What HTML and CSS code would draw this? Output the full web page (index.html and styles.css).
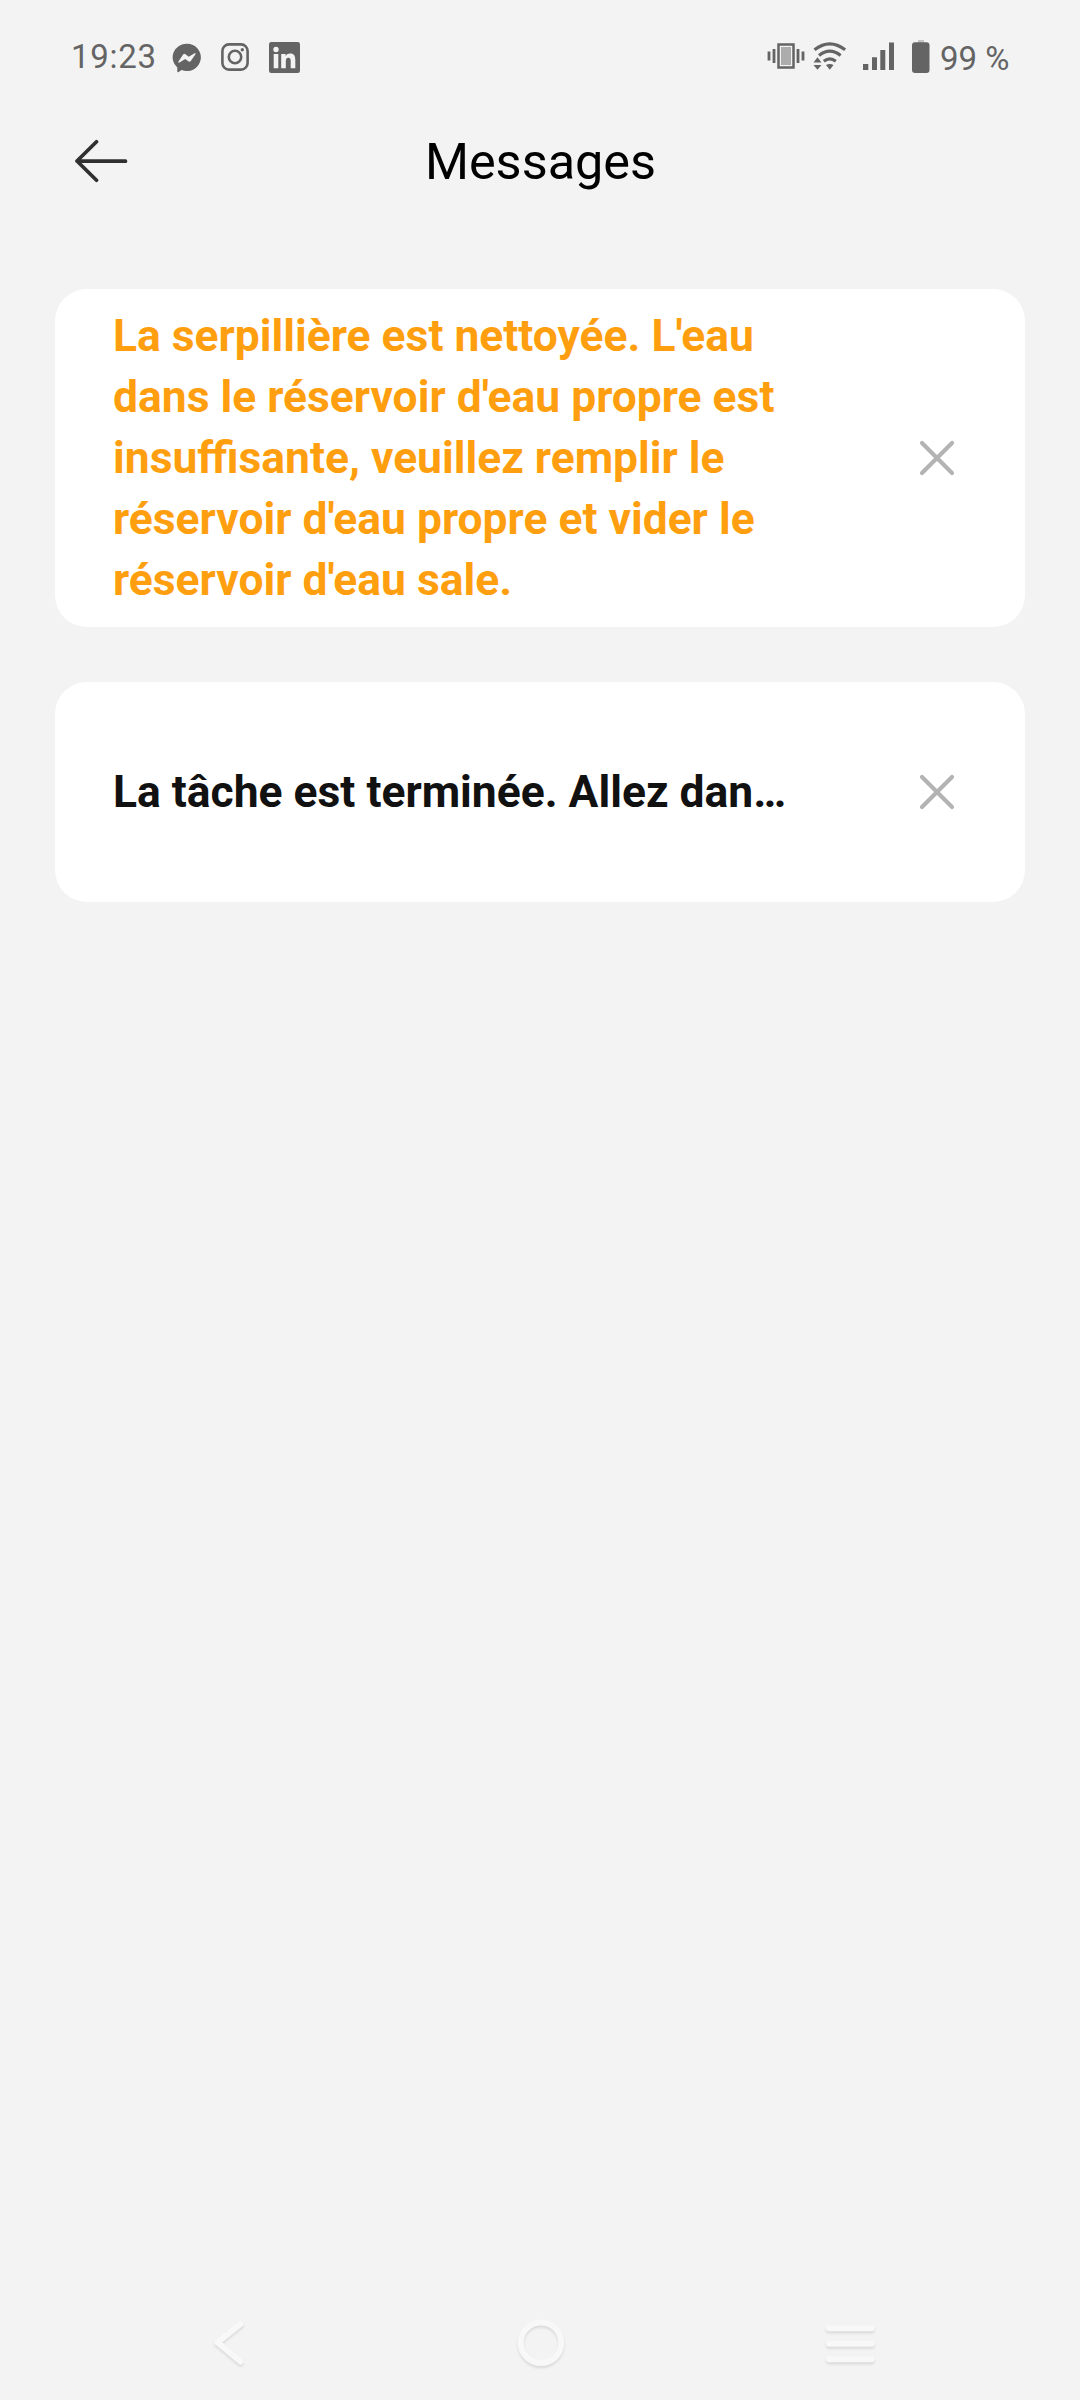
FILE: index.html
```html
<!DOCTYPE html>
<html lang="fr">
<head>
<meta charset="utf-8">
<title>Messages</title>
<link rel="stylesheet" href="styles.css">
</head>
<body>
<div class="screen">
  <div class="status">
    <div class="status-left">
      <span class="clock">19:23</span>
      <svg class="messenger" width="30" height="30" viewBox="0 0 30 30"><path fill="#646464" d="M15 .7a14 13.7 0 1 1-5.4 26.400L6.300 29.200Q5.300 29.500 5.300 28.200V24.600A14 13.700 0 0 1 15 .700Z"/><path fill="#f3f3f3" d="M6.300 18.700 11.300 11.200Q12.300 10.300 13.500 11.200L16.800 13.700 22.600 10.300Q24 9.800 23.600 11L18.800 18Q17.600 19.200 16.300 18.200L13.200 15.900 7.500 19.600Q6.200 19.900 6.300 18.700Z"/></svg>
      <svg class="instagram" width="28" height="28" viewBox="0 0 28 28"><g fill="none" stroke="#646464" stroke-width="2.600"><rect x="1.400" y="1.400" width="25.200" height="25.200" rx="6.500"/><circle cx="14" cy="14" r="6.200"/></g><circle cx="21.300" cy="6.700" r="1.700" fill="#646464"/></svg>
      <svg class="linkedin" width="31" height="31" viewBox="0 0 31 31"><rect width="31" height="31" rx="2.300" fill="#646464"/><g fill="#f3f3f3"><circle cx="7" cy="7.500" r="2.700"/><path d="M4.700 12H9.300V26.300H4.700ZM12.200 12H16.600V14C17.800 12.300 19.300 11.600 21.100 11.600 25.200 11.600 26.300 14.300 26.300 18.100V26.300H21.700V19C21.700 17 21.300 15.700 19.500 15.700 17.500 15.700 16.800 17.200 16.800 19V26.300H12.200Z"/></g></svg>
    </div>
    <div class="status-right">
      <svg class="vibrate" width="38" height="26" viewBox="0 0 38 26"><rect x="11.500" y="1.500" width="15" height="23" fill="#f3f3f3" stroke="#646464" stroke-width="2.500"/><rect x="14" y="4" width="10" height="18" fill="#acacac"/><path stroke="#646464" stroke-width="2.800" d="M2 8.500V17.500M7 6V20M31 6V20M36 8.500V17.500"/></svg>
      <svg class="wifi" width="34" height="28" viewBox="0 0 34 28"><g fill="none" stroke="#646464" stroke-width="3.200"><path d="M1.500 7.800Q16.800-4.100 32.100 7.800M6 13.400Q16.800 4.900 27.600 13.400M10.800 19.200Q16.800 14.500 22.800 19.200"/></g><path fill="#646464" d="M13 23Q16.800 20.800 20.500 23L16.800 27.700ZM.500 20.500 4.500 15.300 8.500 20.500ZM.500 23H8.500L4.500 27.700Z"/></svg>
      <svg class="signal" width="32" height="29" viewBox="0 0 32 29"><path fill="#646464" d="M0 22H5.300V28H0ZM9 15.300H14V28H9ZM17.300 8H22.300V28H17.300ZM26 .500H31V28H26Z"/></svg>
      <svg class="battery" width="18" height="33" viewBox="0 0 18 33"><path fill="#c4c4c4" d="M6 0H12V3H6Z"/><rect y="2.300" width="17.500" height="30.700" rx="3" fill="#646464"/></svg>
      <span class="percent">99 %</span>
    </div>
  </div>
  <header class="header">
    <svg class="back" width="56" height="46" viewBox="0 0 56 46"><path fill="none" stroke="#303030" stroke-width="3.700" stroke-linecap="round" stroke-linejoin="round" d="M50.500 23.200 2 23 21.500 3.700M2 23 21.500 42.300"/></svg>
    <h1 class="title">Messages</h1>
  </header>
  <main class="list">
    <article class="card warning">
      <p class="message">La serpillière est nettoyée. L'eau dans le réservoir d'eau propre est insuffisante, veuillez remplir le réservoir d'eau propre et vider le réservoir d'eau sale.</p>
      <svg class="close" width="36" height="36" viewBox="0 0 36 36"><path stroke="#b3b3b3" stroke-width="4.200" stroke-linecap="round" d="M3 3 33 33M33 3 3 33"/></svg>
    </article>
    <article class="card notice">
      <p class="message">La tâche est terminée. Allez dan…</p>
      <svg class="close" width="36" height="36" viewBox="0 0 36 36"><path stroke="#b3b3b3" stroke-width="4.200" stroke-linecap="round" d="M3 3 33 33M33 3 3 33"/></svg>
    </article>
  </main>
  <nav class="nav">
    <svg class="nav-icon" width="52" height="56" viewBox="0 0 52 56"><path d="M35.500 9 12.500 27.500 35.500 46.500"/></svg>
    <svg class="nav-icon" width="52" height="56" viewBox="0 0 52 56"><circle cx="26" cy="27.800" r="20.300"/></svg>
    <svg class="nav-icon" width="52" height="56" viewBox="0 0 52 56"><path d="M4 13.300H46.500M4 28.800H46.500M4 44.300H46.500"/></svg>
  </nav>
</div>
</body>
</html>
```
FILE: styles.css
```css
* { box-sizing: border-box; }
body { margin: 0; background: #f3f3f3; font-family: Roboto, sans-serif; }
.screen { width: 1080px; height: 2400px; display: flex; flex-direction: column; }
.status { height: 114px; padding: 0 70px 0 71px; display: flex; justify-content: space-between; color: #646464; font-size: 33px; }
.status-left, .status-right { display: flex; align-items: flex-start; }
.clock { width: 101px; padding-top: 38px; line-height: 38px; letter-spacing: .7px; white-space: nowrap; }
.messenger { margin-top: 43px; }
.instagram { margin: 43px 0 0 19px; }
.linkedin { margin: 42px 0 0 20px; }
.vibrate { margin-top: 43px; }
.wifi { margin: 42px 0 0 8px; }
.signal { margin: 42px 0 0 16px; }
.battery { margin: 40px 0 0 17px; }
.percent { width: 70px; margin-left: 10px; padding-top: 40px; line-height: 38px; white-space: nowrap; }
.header { height: 94px; padding: 0 74px 0 75px; display: grid; grid-template-columns: 56px 1fr 56px; align-items: center; }
.title { margin: 0; padding-top: 2px; text-align: center; font-size: 50.4px; font-weight: 400; line-height: 60px; color: #000; }
.list { flex: 1; padding: 81px 55px 0; display: flex; flex-direction: column; gap: 55px; }
.card { padding: 0 70px 0 58px; border-radius: 32px; background: #fff; display: flex; align-items: center; justify-content: space-between; }
.warning { height: 338px; color: #ff9f0f; }
.notice { height: 220px; color: #111; }
.message { width: 680px; margin: 0; font-size: 44.4px; font-weight: 700; line-height: 61px; }
.nav { height: 112px; padding: 0 203px 29px 205px; display: flex; align-items: flex-end; justify-content: space-between; }
.nav-icon { fill: none; stroke: #f8f8f8; stroke-width: 6; stroke-linecap: round; stroke-linejoin: round; filter: drop-shadow(0 2px 1px #d9d9d9); }
```
